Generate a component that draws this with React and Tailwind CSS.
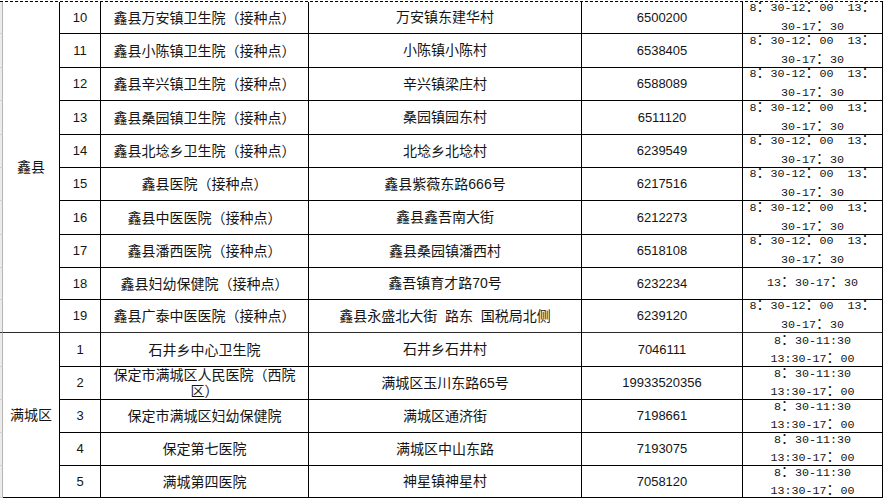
import React from 'react';

const XIN = [
  { no: '10', name: '鑫县万安镇卫生院（接种点）', addr: '万安镇东建华村', tel: '6500200' },
  { no: '11', name: '鑫县小陈镇卫生院（接种点）', addr: '小陈镇小陈村', tel: '6538405' },
  { no: '12', name: '鑫县辛兴镇卫生院（接种点）', addr: '辛兴镇梁庄村', tel: '6588089' },
  { no: '13', name: '鑫县桑园镇卫生院（接种点）', addr: '桑园镇园东村', tel: '6511120' },
  { no: '14', name: '鑫县北埝乡卫生院（接种点）', addr: '北埝乡北埝村', tel: '6239549' },
  { no: '15', name: '鑫县医院（接种点）', addr: '鑫县紫薇东路666号', tel: '6217516' },
  { no: '16', name: '鑫县中医医院（接种点）', addr: '鑫县鑫吾南大街', tel: '6212273' },
  { no: '17', name: '鑫县潘西医院（接种点）', addr: '鑫县桑园镇潘西村', tel: '6518108' },
  { no: '18', name: '鑫县妇幼保健院（接种点）', addr: '鑫吾镇育才路70号', tel: '6232234', time: ['13：30-17：30'] },
  { no: '19', name: '鑫县广泰中医医院（接种点）', addr: '鑫县永盛北大街  路东  国税局北侧', tel: '6239120' },
];

const MAN = [
  { no: '1', name: '石井乡中心卫生院', addr: '石井乡石井村', tel: '7046111' },
  { no: '2', name: ['保定市满城区人民医院（西院', '区）'], addr: '满城区玉川东路65号', tel: '19933520356' },
  { no: '3', name: '保定市满城区妇幼保健院', addr: '满城区通济街', tel: '7198661' },
  { no: '4', name: '保定第七医院', addr: '满城区中山东路', tel: '7193075' },
  { no: '5', name: '满城第四医院', addr: '神星镇神星村', tel: '7058120' },
];

const XIN_TIME = ['8：30-12：00  13：', '30-17：30'];
const MAN_TIME = ['8：30-11:30', '13:30-17：00'];

const ROW_START = [
  'row-start-1', 'row-start-2', 'row-start-3', 'row-start-4', 'row-start-5',
  'row-start-6', 'row-start-7', 'row-start-8', 'row-start-9', 'row-start-10',
  'row-start-11', 'row-start-12', 'row-start-13', 'row-start-14', 'row-start-15',
];

const cjk = "font-['Liberation_Sans','Noto_Sans_CJK_SC',sans-serif]";
const cell = 'flex items-center justify-center text-center border-r border-b border-black';

// full-width colons are wider than the mono digits; keep them out of the line box
const TimeLine = ({ text }) => (
  <div className="whitespace-pre">
    {text.split('：').map((p, i) => (
      <React.Fragment key={i}>
        {i > 0 && <span className="text-[14px] leading-[0px] font-['Noto_Sans_CJK_SC',sans-serif]">：</span>}
        {p}
      </React.Fragment>
    ))}
  </div>
);

const RowAt = ({ r, row, time, leading, last }) => {
  const rs = ROW_START[row];
  const b = last ? 'border-b-[#2a2a2a]' : '';
  const names = Array.isArray(r.name) ? r.name : [r.name];
  return (
    <>
      <div className={`col-start-1 ${rs} bg-[#ebebeb] border-r border-[#b5b5b5] border-b ${last ? 'border-b-[#3a3a3a]' : 'border-b-[#d2d2d2]'}`} />
      <div className={`${cell} col-start-3 ${rs} text-[13px] ${b}`}>{r.no}</div>
      <div className={`${cell} col-start-4 ${rs} text-[14px] leading-[16px] ${b}`}>
        <div>{names.map((n) => <div key={n}>{n}</div>)}</div>
      </div>
      <div className={`${cell} col-start-5 ${rs} text-[14px] whitespace-pre ${b}`}>{r.addr}</div>
      <div className={`${cell} col-start-6 ${rs} text-[13px] ${b}`}>{r.tel}</div>
      <div className={`${cell} col-start-7 ${rs} text-[11.7px] ${leading} font-['Liberation_Mono','Noto_Sans_CJK_SC',monospace] ${b}`}>
        <div>{(r.time || time).map((t) => <TimeLine key={t} text={t} />)}</div>
      </div>
    </>
  );
};

export default function App() {
  return (
    <div className={`w-[884px] h-[500px] overflow-hidden bg-white pt-px text-[#151515] ${cjk}`}>
      <div className="grid grid-cols-[3px_57px_41px_208px_273px_161px_140px] grid-rows-[32px_34px_33px_34px_33px_33px_34px_33px_32px_33px_34px_33px_33px_33px_32px] border-t border-dashed border-black w-[883px]">
        <div className={`${cell} col-start-2 row-start-1 row-span-10 text-[14px] border-b-[#2a2a2a]`}>鑫县</div>
        <div className={`${cell} col-start-2 row-start-11 row-span-5 text-[14px]`}>满城区</div>
        {XIN.map((r, i) => (
          <RowAt key={'x' + r.no} r={r} row={i} time={XIN_TIME} leading="leading-[19px]" last={i === XIN.length - 1} />
        ))}
        {MAN.map((r, i) => (
          <RowAt key={'m' + r.no} r={r} row={i + 10} time={MAN_TIME} leading="leading-[18px]" last={false} />
        ))}
      </div>
    </div>
  );
}
